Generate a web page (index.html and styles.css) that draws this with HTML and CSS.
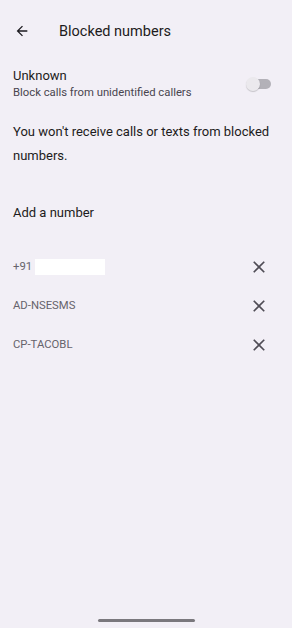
FILE: index.html
```html
<!DOCTYPE html>
<html>
<head>
<meta charset="utf-8">
<link rel="stylesheet" href="styles.css">
</head>
<body>
<div class="screen">
  <header class="appbar">
    <svg class="back" width="16" height="16" viewBox="0 0 24 24"><path d="M20 11H7.830l5.590-5.590L12 4l-8 8 8 8 1.410-1.410L7.830 13H20v-2z" fill="#1d1b20"/></svg>
    <h1 class="title">Blocked numbers</h1>
  </header>
  <section class="setting">
    <div class="setting-text">
      <div class="setting-title">Unknown</div>
      <div class="setting-sub">Block calls from unidentified callers</div>
    </div>
    <div class="switch"><span class="thumb"></span></div>
  </section>
  <p class="info">You won't receive calls or texts from blocked numbers.</p>
  <div class="add">Add a number</div>
  <ul class="list">
    <li class="item"><span class="num">+91 <span class="mask"></span></span>
      <svg class="x" width="20" height="20" viewBox="0 0 24 24"><path d="M19 6.41L17.59 5 12 10.59 6.41 5 5 6.41 10.59 12 5 17.59 6.41 19 12 13.41 17.59 19 19 17.59 13.41 12z" fill="#4f4c55"/></svg></li>
    <li class="item"><span class="num">AD-NSESMS</span>
      <svg class="x" width="20" height="20" viewBox="0 0 24 24"><path d="M19 6.41L17.59 5 12 10.59 6.41 5 5 6.41 10.59 12 5 17.59 6.41 19 12 13.41 17.59 19 19 17.59 13.41 12z" fill="#4f4c55"/></svg></li>
    <li class="item"><span class="num">CP-TACOBL</span>
      <svg class="x" width="20" height="20" viewBox="0 0 24 24"><path d="M19 6.41L17.59 5 12 10.59 6.41 5 5 6.41 10.59 12 5 17.59 6.41 19 12 13.41 17.59 19 19 17.59 13.41 12z" fill="#4f4c55"/></svg></li>
  </ul>
  <div class="spacer"></div>
  <div class="home"></div>
</div>
</body>
</html>
```
FILE: styles.css
```css
* { box-sizing: border-box; }
html, body { margin: 0; padding: 0; }
body {
  background: #f2eff6;
  font-family: Roboto, "Noto Sans", sans-serif;
  color: #1d1b20;
}
.screen {
  width: 292px;
  height: 628px;
  display: flex;
  flex-direction: column;
  overflow: hidden;
}
.appbar {
  display: flex;
  align-items: center;
  height: 36px;
  margin-top: 13px;
  padding-left: 14px;
}
.back { display: block; }
.title {
  margin: 0 0 0 29px;
  font-size: 14.5px;
  font-weight: 400;
  color: #1d1b20;
}
.setting {
  display: flex;
  align-items: center;
  justify-content: space-between;
  margin-top: 18px;
  padding: 0 21px 0 13px;
}
.setting-title { font-size: 13px; line-height: 18px; }
.setting-sub { font-size: 11.3px; line-height: 16px; color: #49454f; }
.switch {
  position: relative;
  width: 20px;
  height: 10px;
  border-radius: 5px;
  background: #b3b1b8;
}
.thumb {
  position: absolute;
  left: -5px;
  top: -2px;
  width: 14px;
  height: 14px;
  border-radius: 50%;
  background: #ebe9ed;
  box-shadow: 0 1px 1px rgba(0,0,0,0.18);
}
.info {
  margin: 19px 0 0;
  padding: 0 13px;
  font-size: 13px;
  line-height: 24px;
}
.add {
  margin-top: 36px;
  padding: 0 13px;
  font-size: 13px;
  line-height: 18px;
}
.list {
  list-style: none;
  margin: 25px 0 0;
  padding: 0;
}
.item {
  display: flex;
  align-items: center;
  justify-content: space-between;
  height: 39px;
  padding: 0 23px 0 13px;
}
.num {
  display: flex;
  align-items: center;
  gap: 3px;
  font-size: 11.3px;
  color: #66636b;
}
.mask {
  display: inline-block;
  width: 70px;
  height: 16px;
  background: #ffffff;
}
.x { display: block; }
.spacer { flex: 1; }
.home {
  align-self: center;
  width: 97px;
  height: 3px;
  border-radius: 2px;
  background: #7a787d;
  margin-bottom: 6px;
}
```
